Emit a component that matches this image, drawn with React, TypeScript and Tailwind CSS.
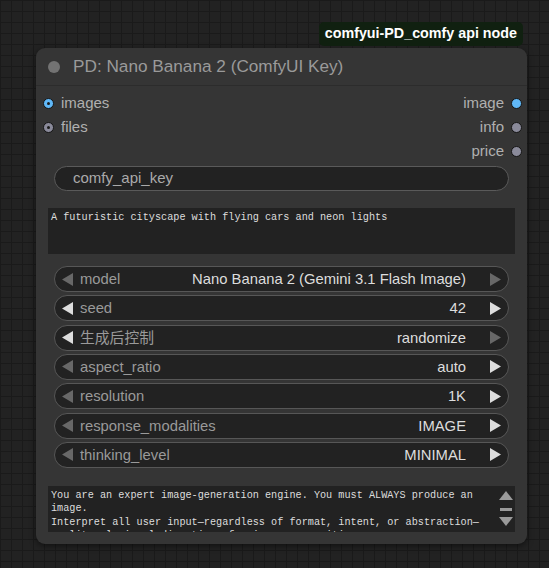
const combos = [
  { label: 'model', value: 'Nano Banana 2 (Gemini 3.1 Flash Image)', left: false, right: false },
  { label: 'seed', value: '42', left: true, right: true },
  { label: '生成后控制', value: 'randomize', left: true, right: false },
  { label: 'aspect_ratio', value: 'auto', left: false, right: true },
  { label: 'resolution', value: '1K', left: false, right: true },
  { label: 'response_modalities', value: 'IMAGE', left: false, right: true },
  { label: 'thinking_level', value: 'MINIMAL', left: false, right: true },
];

function Arrow({ dir, on }: { dir: 'l' | 'r'; on: boolean }) {
  return (
    <svg width="12" height="13" viewBox="0 0 12 13" className="shrink-0">
      <polygon
        points={dir === 'l' ? '11,0 11,13 0,6.5' : '1,0 1,13 12,6.5'}
        fill={on ? '#dddddd' : '#686868'}
      />
    </svg>
  );
}

function Dot({ color, hollow }: { color: string; hollow?: boolean }) {
  return (
    <span
      className="w-[11px] h-[11px] rounded-full border border-[#151515] flex items-center justify-center shrink-0"
      style={{ background: color }}
    >
      {hollow && <span className="w-[3px] h-[3px] rounded-full bg-[#1b1b1b]" />}
    </span>
  );
}

export default function App() {
  const font = { fontFamily: '"Liberation Sans", Arial, "Noto Sans CJK SC", sans-serif' };
  const mono = { fontFamily: '"Liberation Mono", "Courier New", monospace' };

  return (
    <div
      className="w-[549px] h-[568px] overflow-hidden bg-[#222222] bg-[linear-gradient(#1a1a1a_1px,transparent_1px),linear-gradient(90deg,#1a1a1a_1px,transparent_1px)] bg-[size:11px_11px] pt-[22px]"
      style={font}
    >
      <div className="flex justify-end pr-[26px]">
        <div className="h-6 px-[6px] rounded-[5px] bg-[#102010] text-white font-bold text-[14.3px] flex items-center">
          comfyui-PD_comfy api node
        </div>
      </div>

      <div className="ml-[36px] mt-[2px] w-[491px] rounded-[9px] bg-[#353535] shadow-[0_2px_6px_rgba(0,0,0,0.5)] pb-[12px]">
        <div className="h-[38px] flex items-center border-b border-[#2c2c2c] pl-[12px]">
          <span className="w-[12px] h-[12px] rounded-full bg-[#737373]" />
          <span className="ml-[13px] text-[17.2px] text-[#9a9a9a]">PD: Nano Banana 2 (ComfyUI Key)</span>
        </div>

        <div className="mt-[5px] flex justify-between">
          <div className="flex flex-col">
            <div className="h-6 flex items-center gap-[7px] pl-[7px]">
              <Dot color="#60b8f8" hollow />
              <span className="text-[15px] text-[#b0b0b0]">images</span>
            </div>
            <div className="h-6 flex items-center gap-[7px] pl-[7px]">
              <Dot color="#8a8a9a" hollow />
              <span className="text-[15px] text-[#b0b0b0]">files</span>
            </div>
          </div>
          <div className="flex flex-col items-end">
            {[
              ['image', '#60b8f8'],
              ['info', '#8a8a9a'],
              ['price', '#8a8a9a'],
            ].map(([t, c]) => (
              <div key={t} className="h-6 flex items-center gap-[7px] pr-[5px]">
                <span className="text-[15px] text-[#b0b0b0]">{t}</span>
                <Dot color={c} />
              </div>
            ))}
          </div>
        </div>

        <div className="mx-[18px] mt-[3px] h-[25px] rounded-full border border-[#5a5a5a] bg-[#222222] flex items-center pl-[18px] text-[15px] text-[#aaaaaa]">
          comfy_api_key
        </div>

        <div
          className="mx-[12px] mt-[17px] h-[46px] bg-[#222222] px-[3px] pt-[3px] text-[10.2px] leading-[13.3px] text-[#dddddd]"
          style={mono}
        >
          A futuristic cityscape with flying cars and neon lights
        </div>

        <div className="mx-[18px] mt-[12px] flex flex-col gap-[3.33px]">
          {combos.map((c) => (
            <div
              key={c.label}
              className="h-[26px] rounded-full border border-[#575757] bg-[#222222] flex items-center pl-[7px] pr-[7px] text-[14.8px]"
            >
              <Arrow dir="l" on={c.left} />
              <span className="ml-[6px] text-[#9a9a9a]">{c.label}</span>
              <span className="ml-auto text-[#dddddd]">{c.value}</span>
              <span className="ml-[23px]">
                <Arrow dir="r" on={c.right} />
              </span>
            </div>
          ))}
        </div>

        <div className="mx-[12px] mt-[18px] h-[46px] bg-[#222222] flex overflow-hidden">
          <div
            className="flex-1 px-[3px] pt-[3px] text-[10.2px] leading-[13.3px] text-[#dddddd] overflow-hidden"
            style={mono}
          >
            You are an expert image-generation engine. You must ALWAYS produce an
            <br />
            image.
            <br />
            Interpret all user input—regardless of format, intent, or abstraction—
            <br />
            as literal visual directives for image composition.
          </div>
          <div className="w-[18px] flex flex-col items-center pt-[5px] gap-[4px]">
            <svg width="14" height="10" viewBox="0 0 14 10">
              <polygon points="7,0 14,9 0,9" fill="#9a9a9a" />
            </svg>
            <div className="w-[12px] h-[3px] bg-[#9a9a9a] mt-[3px]" />
            <svg width="14" height="10" viewBox="0 0 14 10" className="mt-[1px]">
              <polygon points="0,1 14,1 7,10" fill="#9a9a9a" />
            </svg>
          </div>
        </div>
      </div>
    </div>
  );
}
